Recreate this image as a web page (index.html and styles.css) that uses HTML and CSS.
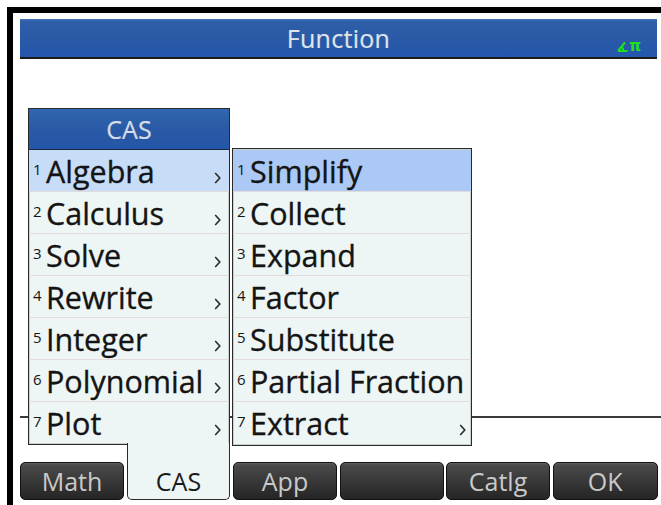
FILE: index.html
```html
<!DOCTYPE html>
<html>
<head>
<meta charset="utf-8">
<link rel="stylesheet" href="styles.css">
</head>
<body>
<div class="device">
  <div class="screen">
    <header class="titlebar">
      <span class="title">Function</span>
      <span class="status">
        <svg class="angle" width="11" height="11" viewBox="0 0 11 11"><path d="M1 10 H10.5 M1 10 L8 1.5 M4.5 6 Q6.3 7 6.3 9.8" fill="none" stroke="#1fe01f" stroke-width="2"/></svg><span class="pi">π</span>
      </span>
    </header>
    <main class="home">
      <div class="divider"></div>
    </main>
    <nav class="softkeys">
      <div class="key">Math</div>
      <div class="key key-open"></div>
      <div class="key">App</div>
      <div class="key"></div>
      <div class="key">Catlg</div>
      <div class="key">OK</div>
    </nav>

    <div class="menu main-menu">
      <div class="menu-head">CAS</div>
      <div class="row sel"><span class="num">1</span><span class="label">Algebra</span><svg class="chev" width="7" height="12" viewBox="0 0 7 12"><path d="M1.2 1 L5.8 6 L1.2 11" fill="none" stroke="#2a2a2a" stroke-width="1.6"/></svg></div>
      <div class="row"><span class="num">2</span><span class="label">Calculus</span><svg class="chev" width="7" height="12" viewBox="0 0 7 12"><path d="M1.2 1 L5.8 6 L1.2 11" fill="none" stroke="#2a2a2a" stroke-width="1.6"/></svg></div>
      <div class="row"><span class="num">3</span><span class="label">Solve</span><svg class="chev" width="7" height="12" viewBox="0 0 7 12"><path d="M1.2 1 L5.8 6 L1.2 11" fill="none" stroke="#2a2a2a" stroke-width="1.6"/></svg></div>
      <div class="row"><span class="num">4</span><span class="label">Rewrite</span><svg class="chev" width="7" height="12" viewBox="0 0 7 12"><path d="M1.2 1 L5.8 6 L1.2 11" fill="none" stroke="#2a2a2a" stroke-width="1.6"/></svg></div>
      <div class="row"><span class="num">5</span><span class="label">Integer</span><svg class="chev" width="7" height="12" viewBox="0 0 7 12"><path d="M1.2 1 L5.8 6 L1.2 11" fill="none" stroke="#2a2a2a" stroke-width="1.6"/></svg></div>
      <div class="row"><span class="num">6</span><span class="label">Polynomial</span><svg class="chev" width="7" height="12" viewBox="0 0 7 12"><path d="M1.2 1 L5.8 6 L1.2 11" fill="none" stroke="#2a2a2a" stroke-width="1.6"/></svg></div>
      <div class="row last"><span class="num">7</span><span class="label">Plot</span><svg class="chev" width="7" height="12" viewBox="0 0 7 12"><path d="M1.2 1 L5.8 6 L1.2 11" fill="none" stroke="#2a2a2a" stroke-width="1.6"/></svg></div>
    </div>
    <div class="tab">CAS</div>

    <div class="menu sub-menu">
      <div class="row sel2"><span class="num">1</span><span class="label">Simplify</span></div>
      <div class="row"><span class="num">2</span><span class="label">Collect</span></div>
      <div class="row"><span class="num">3</span><span class="label">Expand</span></div>
      <div class="row"><span class="num">4</span><span class="label">Factor</span></div>
      <div class="row"><span class="num">5</span><span class="label">Substitute</span></div>
      <div class="row"><span class="num">6</span><span class="label">Partial Fraction</span></div>
      <div class="row last"><span class="num">7</span><span class="label">Extract</span><svg class="chev" width="7" height="12" viewBox="0 0 7 12"><path d="M1.2 1 L5.8 6 L1.2 11" fill="none" stroke="#2a2a2a" stroke-width="1.6"/></svg></div>
    </div>
  </div>
</div>
</body>
</html>
```

FILE: styles.css
```css
* { box-sizing: border-box; }
html, body {
  margin: 0;
  padding: 0;
  background: #fff;
  width: 661px;
  height: 505px;
  overflow: hidden;
  font-family: "Open Sans", "Noto Sans", sans-serif;
}
.device {
  padding: 7px 0 0 7px;
  height: 505px;
}
.screen {
  position: relative;
  height: 498px;
  border-top: 6px solid #000;
  border-left: 6px solid #000;
  background: #fff;
  padding: 6px 0 0 7px;
  display: flex;
  flex-direction: column;
}
.titlebar {
  position: relative;
  height: 40px;
  margin-right: 4px;
  background: linear-gradient(#4a79bd 0, #2f5fa9 2px, #2b5aa6 45%, #2357ad 100%);
  border-bottom: 2px solid #1b1b1b;
  display: flex;
  align-items: center;
  justify-content: center;
}
.title {
  color: #dfe4ea;
  font-size: 25px;
  line-height: 38px;
  letter-spacing: 0.3px;
  -webkit-text-stroke: 0.2px #dfe4ea;
}
.status {
  position: absolute;
  right: 16px;
  bottom: 4px;
  display: flex;
  align-items: flex-end;
  gap: 1px;
}
.angle { display: block; margin-bottom: 1px; }
.pi {
  color: #1fe01f;
  font-family: "DejaVu Sans", sans-serif;
  font-weight: bold;
  font-size: 15px;
  line-height: 13px;
}
.home {
  flex: 1;
  position: relative;
}
.divider {
  position: absolute;
  left: 0;
  right: 0;
  top: 357px;
  height: 2px;
  background: #3a3a3a;
}
.softkeys {
  height: 38px;
  margin-bottom: 5px;
  margin-right: 3px;
  display: grid;
  grid-template-columns: repeat(5, 104px) 1fr;
  column-gap: 2.5px;
}
.key {
  border: 1px solid #121212;
  border-radius: 5px;
  background: linear-gradient(#606060 0, #4a4a4a 2px, #3c3c3c 40%, #252525 100%);
  color: #c9c9c9;
  font-size: 25px;
  line-height: 36px;
  text-align: center;
}
.key-open {
  visibility: hidden;
}
.menu {
  position: absolute;
  background: #eef6f5;
  border: 1px solid #2a2a2a;
  box-shadow: inset 0 0 0 1px #c8d0d0;
}
.main-menu {
  left: 15px;
  top: 95px;
  width: 202px;
  height: 337px;
  display: flex;
  flex-direction: column;
}
.menu-head {
  height: 41px;
  background: linear-gradient(#3266b0 0, #2a5aa5 50%, #2456a8 100%);
  border-bottom: 1px solid #1d2a44;
  color: #d6dde8;
  font-size: 25px;
  line-height: 40px;
  text-align: center;
  -webkit-text-stroke: 0.2px #d6dde8;
}
.row {
  height: 42px;
  display: flex;
  align-items: center;
  padding-left: 4px;
  padding-right: 8px;
  border-bottom: 1px solid #e4dcdc;
  color: #141414;
  position: relative;
}
.row.last { border-bottom: none; }
.row.sel { background: #c6dcf7; }
.row.sel2 { background: #abc9f4; }
.num {
  font-size: 15px;
  width: 13px;
  align-self: flex-start;
  margin-top: 12px;
  line-height: 14px;
  flex: none;
}
.label {
  font-size: 30.5px;
  line-height: 40px;
  letter-spacing: 0;
  flex: 1;
  white-space: nowrap;
  -webkit-text-stroke: 0.35px #141414;
}
.chev {
  flex: none;
  margin-top: 14px;
}
.sub-menu {
  left: 219px;
  top: 135px;
  width: 240px;
  height: 298px;
  padding-top: 1px;
}
.sub-menu .row { padding-right: 5px; }
.tab {
  position: absolute;
  left: 114px;
  top: 430px;
  width: 103px;
  height: 57px;
  background: #eef6f5;
  border: 1px solid #2a2a2a;
  border-top: none;
  border-radius: 0 0 5px 5px;
  color: #1a1a1a;
  font-size: 25px;
  line-height: 24px;
  text-align: center;
  padding-top: 26px;
}
```
